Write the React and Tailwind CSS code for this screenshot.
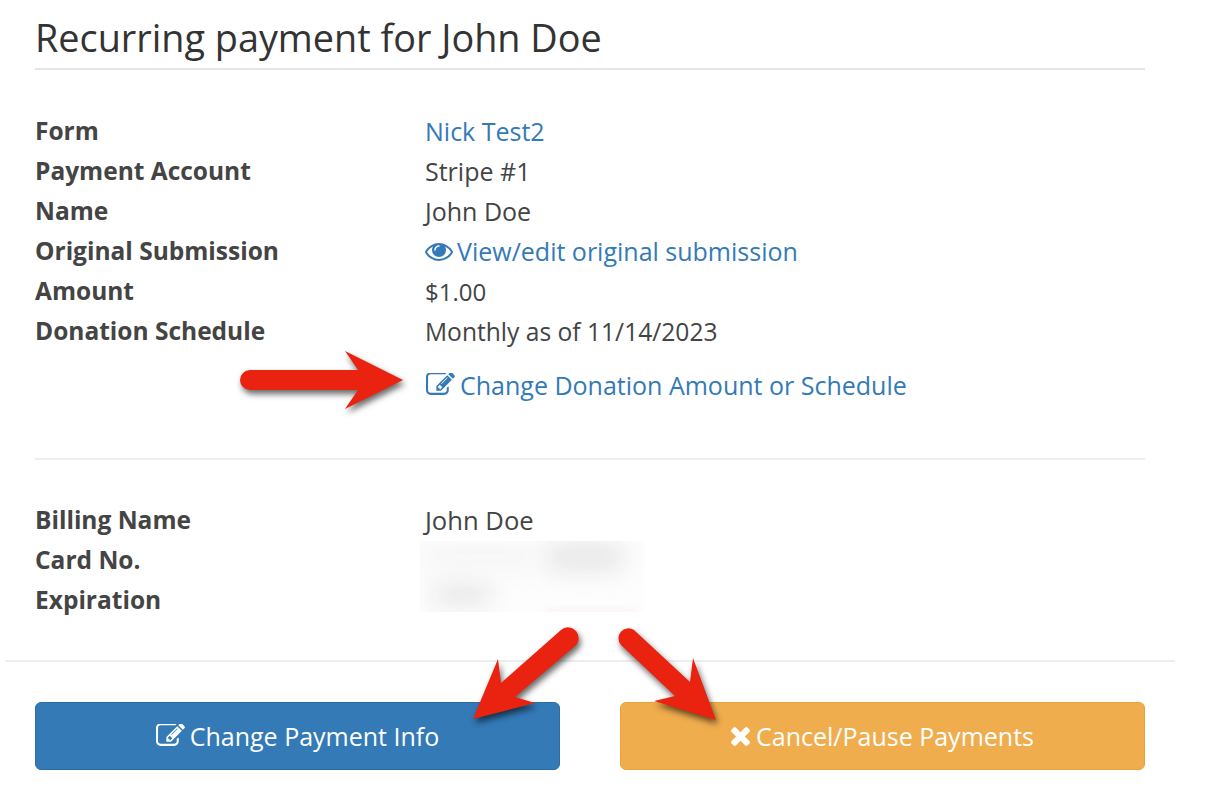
import React from "react";

// FontAwesome 4 glyphs, the icon set has moved on from these shapes
function EditIcon({ className }) {
  return (
    <svg className={className} viewBox="0 192 1792 1344" fill="currentColor">
      <path d="M888 1184l116-116-152-152-116 116v56h96v96h56zm440-720q-16-16-33 1l-350 350q-17 17-1 33t33-1l350-350q17-17 1-33zm80 594v190q0 119-84.5 203.5t-203.5 84.5h-832q-119 0-203.5-84.5t-84.5-203.5v-832q0-119 84.5-203.5t203.5-84.5h832q63 0 117 25 15 7 18 23 3 17-9 29l-49 49q-14 14-32 8-23-6-45-6h-832q-66 0-113 47t-47 113v832q0 66 47 113t113 47h832q66 0 113-47t47-113v-126q0-13 9-22l64-64q15-15 35-7t20 29zm-96-738l288 288-672 672h-288v-288zm444 132l-92 92-288-288 92-92q28-28 68-28t68 28l152 152q28 28 28 68t-28 68z" />
    </svg>
  );
}

function EyeIcon({ className }) {
  return (
    <svg className={className} viewBox="0 256 1792 1280" fill="currentColor">
      <path d="M1664 960q-152-236-381-353 61 104 61 225 0 185-131.5 316.5t-316.5 131.5-316.5-131.5-131.5-316.5q0-121 61-225-229 117-381 353 133 205 333.5 326.5t434.5 121.5 434.5-121.5 333.5-326.5zm-720-384q0-20-14-34t-34-14q-125 0-214.5 89.5t-89.5 214.5q0 20 14 34t34 14 34-14 14-34q0-86 61-147t147-61q20 0 34-14t14-34zm848 384q0 34-20 69-140 230-376.5 368.5t-499.5 138.5-499.5-139-376.5-368q-20-35-20-69t20-69q140-229 376.5-368t499.5-139 499.5 139 376.5 368q20 35 20 69z" />
    </svg>
  );
}

function TimesIcon({ className }) {
  return (
    <svg className={className} viewBox="302 302 1188 1252" fill="currentColor">
      <path d="M1490 1322q0 40-28 68l-136 136q-28 28-68 28t-68-28l-294-294-294 294q-28 28-68 28t-68-28l-136-136q-28-28-28-68t28-68l294-294-294-294q-28-28-28-68t28-68l136-136q28-28 68-28t68 28l294 294 294-294q28-28 68-28t68 28l136 136q28 28 28 68t-28 68l-294 294 294 294q28 28 28 68z" />
    </svg>
  );
}

const rowsTop = [
  { label: "Form", value: <a className="text-[#337ab7]">Nick Test2</a> },
  { label: "Payment Account", value: "Stripe #1" },
  { label: "Name", value: "John Doe" },
  {
    label: "Original Submission",
    value: (
      <a className="flex items-center gap-[4px] text-[#337ab7]">
        <EyeIcon className="w-[28px] h-[20px]" />
        View/edit original submission
      </a>
    ),
  },
  { label: "Amount", value: <span className="text-[24px]">$1.00</span> },
  {
    label: "Donation Schedule",
    value: <span className="text-[24.6px]">Monthly as of 11/14/2023</span>,
  },
];

function Row({ label, value }) {
  return (
    <div className="flex h-10 items-center">
      <div className="w-[390px] font-bold text-[24.5px] text-[#444]">{label}</div>
      <div className="text-[#444]">{value}</div>
    </div>
  );
}

// blurred-out card details
function Redacted() {
  return (
    <div className="absolute left-[385px] top-[81px] w-[224px] h-[71px] overflow-hidden bg-[#fdfdfd]">
      <div className="absolute left-[125px] top-[2px] w-[80px] h-[28px] rounded-full bg-[#e6e6e6] blur-[12px]" />
      <div className="absolute left-[12px] top-[42px] w-[60px] h-[24px] rounded-full bg-[#e8e8e8] blur-[12px]" />
      <div className="absolute left-[0px] top-[4px] w-[120px] h-[24px] rounded-full bg-[#f5f5f5] blur-[12px]" />
      <div className="absolute left-[125px] top-[68px] w-[90px] h-[6px] bg-[#fdf3f3] blur-[3px]" />
    </div>
  );
}

export default function App() {
  return (
    <div className="relative w-[1206px] h-[790px] overflow-hidden bg-white font-['Open_Sans','Noto_Sans',sans-serif] text-[25px] leading-10">
      <div className="w-[1170px] ml-[5px]">
        <div className="px-[30px]">
          <h1 className="h-[70px] pt-[18px] border-b-2 border-[#e5e5e5] text-[37.8px] leading-10 text-[#333]">
            Recurring payment for John Doe
          </h1>

          <div className="pt-[41px]">
            {rowsTop.map((r) => (
              <Row key={r.label} label={r.label} value={r.value} />
            ))}
            <div className="flex h-[68px] items-center pl-[391px]">
              <a className="flex items-center gap-[5px] text-[#337ab7]">
                <EditIcon className="w-[29px] h-[22px] mb-[3px]" />
                Change Donation Amount or Schedule
              </a>
            </div>
          </div>

          <div className="mt-[39px] border-t-2 border-[#eeeeee]" />

          <div className="relative pt-[40px]">
            <Row label="Billing Name" value={<span className="text-[25.6px]">John Doe</span>} />
            <Row label="Card No." value="" />
            <Row label="Expiration" value="" />
            <Redacted />
          </div>
        </div>

        <div className="mt-[40px] border-t-2 border-[#eeeeee] px-[30px] pt-[40px]">
          <div className="flex justify-between">
            <button className="flex w-[525px] h-[68px] items-center justify-center gap-[5px] rounded-md border border-[#2e6da4] bg-[#337ab7] text-white">
              <EditIcon className="w-[29px] h-[22px] mb-[3px]" />
              Change Payment Info
            </button>
            <button className="flex w-[525px] h-[68px] items-center justify-center gap-[6px] rounded-md border border-[#eea236] bg-[#f0ad4e] text-white">
              <TimesIcon className="w-[19px] h-[20px]" />
              Cancel/Pause Payments
            </button>
          </div>
        </div>
      </div>

      {/* red annotation arrows */}
      <svg
        className="absolute left-0 top-0 w-[1206px] h-[790px] pointer-events-none drop-shadow-[2px_4px_3px_rgba(0,0,0,0.6)]"
        viewBox="0 0 1206 790"
        fill="#ea2210"
      >
        <path d="M250 370 L358 370 L345 351 L403 380 L345 409 L358 390 L250 390 A10 10 0 0 1 250 370 Z" />
        <path d="M561 630 L501 683 L498 659 L473 719 L535 703 L515 697 L575 646 A10 10 0 0 0 561 630 Z" />
        <path d="M634 630 L690 682 L693 658 L716 720 L654 701 L675 696 L621 645 A10 10 0 0 1 634 630 Z" />
      </svg>
    </div>
  );
}
